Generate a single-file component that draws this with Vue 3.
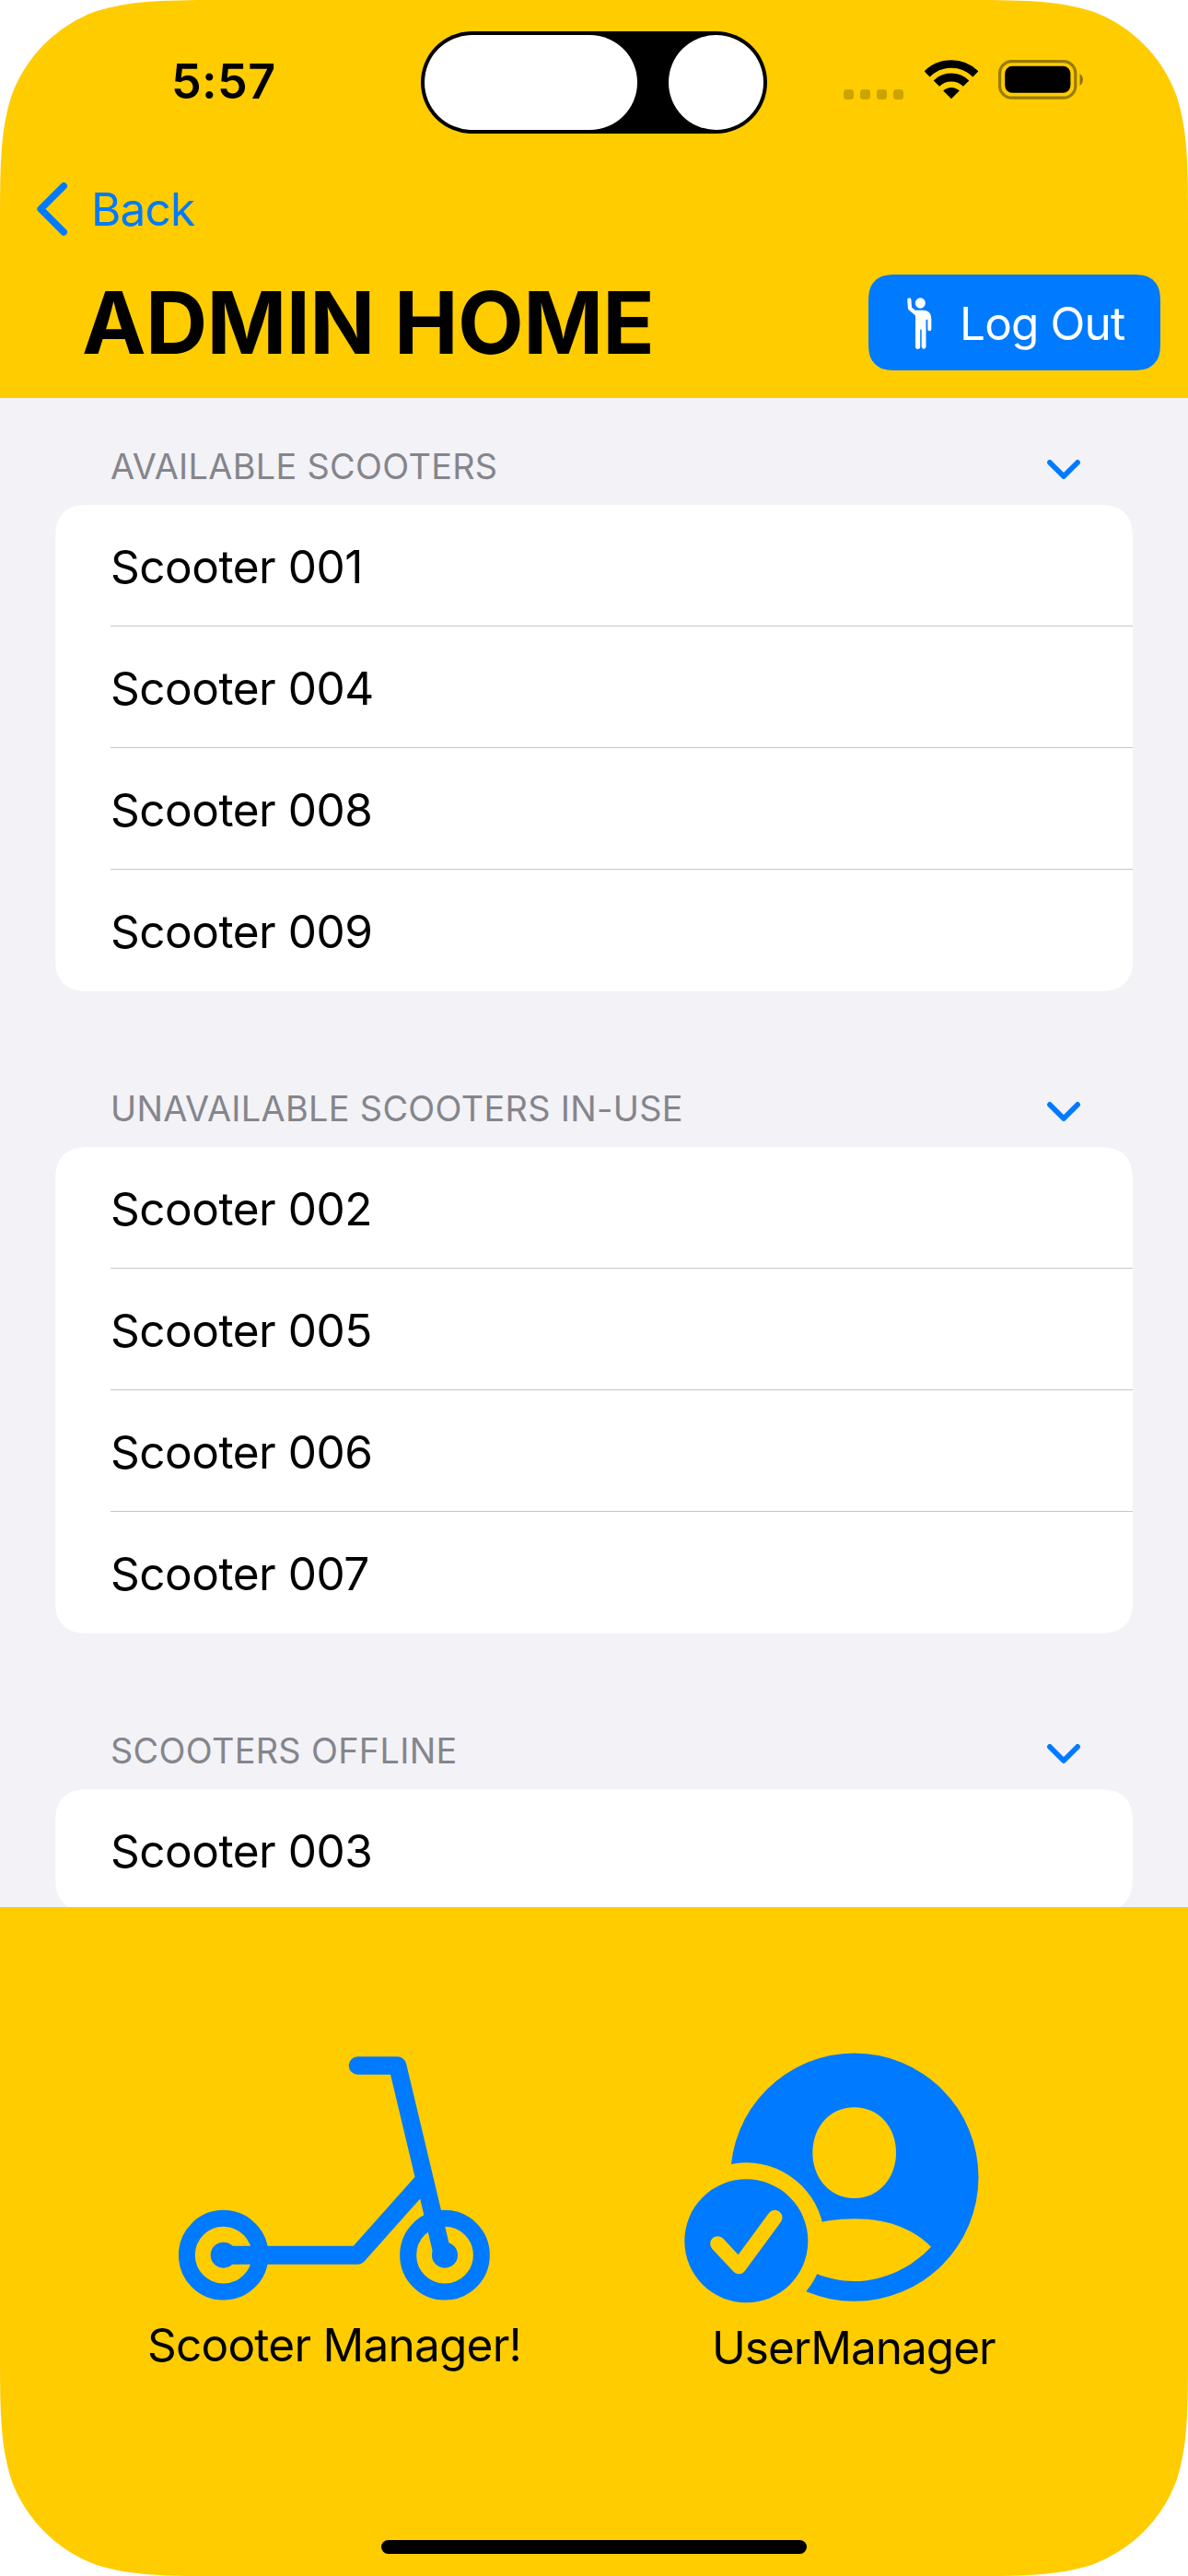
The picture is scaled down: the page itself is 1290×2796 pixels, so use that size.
<script setup>
const sections = [
  { title: 'Available Scooters', scooters: ['001', '004', '008', '009'] },
  { title: 'Unavailable Scooters In-Use', scooters: ['002', '005', '006', '007'] },
  { title: 'Scooters Offline', scooters: ['003'] },
]

const ROW_HEIGHT = 132

// Continuous-curvature rounded rectangle, as a clip-path value.
function squircle(w, h, r) {
  const a = 1.528665 * r
  const b = 1.08849 * r
  const c = 0.868407 * r
  const d = 0.631494 * r
  const e = 0.07491 * r
  const f = 0.372824 * r
  const g = 0.16906 * r
  return (
    `path("M${a} 0H${w - a}C${w - b} 0 ${w - c} 0 ${w - d} ${e}` +
    `C${w - f} ${g} ${w - g} ${f} ${w - e} ${d}C${w} ${c} ${w} ${b} ${w} ${a}` +
    `V${h - a}C${w} ${h - b} ${w} ${h - c} ${w - e} ${h - d}` +
    `C${w - g} ${h - f} ${w - f} ${h - g} ${w - d} ${h - e}C${w - c} ${h} ${w - b} ${h} ${w - a} ${h}` +
    `H${a}C${b} ${h} ${c} ${h} ${d} ${h - e}C${f} ${h - g} ${g} ${h - f} ${e} ${h - d}` +
    `C0 ${h - c} 0 ${h - b} 0 ${h - a}V${a}C0 ${b} 0 ${c} ${e} ${d}` +
    `C${g} ${f} ${f} ${g} ${d} ${e}C${c} 0 ${b} 0 ${a} 0Z")`
  )
}

const screenClip = squircle(1290, 2796, 165)
const buttonClip = squircle(317, 104, 24)
const cardClip = (count) => squircle(1170, count * ROW_HEIGHT, 30)
</script>

<template>
  <div class="screen" :style="{ clipPath: screenClip }">
    <header class="header">
      <div class="status">
        <div class="time">5:57</div>
        <div class="island">
          <span class="island-pill"></span>
          <span class="island-dot"></span>
        </div>
        <div class="indicators">
          <div class="signal"><i></i><i></i><i></i><i></i></div>
          <svg class="wifi" width="58" height="43" viewBox="0 0 58 43">
            <g fill="none" stroke="#000">
              <path d="M2.6 15.4A37.4 37.4 0 0 1 55.4 15.4" stroke-width="8.6" />
              <path d="M12.9 25.6A22.8 22.8 0 0 1 45.1 25.6" stroke-width="9" />
            </g>
            <path d="M29 42.3L20.2 33.4A12.8 12.8 0 0 1 37.8 33.4Z" />
          </svg>
          <svg class="battery" width="95" height="43" viewBox="0 0 95 43">
            <rect x="1.6" y="1.6" width="82.2" height="39.6" rx="13" fill="none" stroke="#000" stroke-opacity=".4" stroke-width="3.2" />
            <rect x="7.2" y="6.8" width="71.2" height="29" rx="8" />
            <path d="M88.5 15A8 8 0 0 1 88.5 28Z" fill-opacity=".45" />
          </svg>
        </div>
      </div>

      <a class="back">
        <svg width="35" height="58" viewBox="0 0 35 58">
          <path d="M29.2 3.9L4.2 28.9L29.2 53.9" fill="none" stroke="#007aff" stroke-width="7.6" stroke-linecap="round" stroke-linejoin="round" />
        </svg>
        <span>Back</span>
      </a>

      <div class="title-row">
        <h1>ADMIN HOME</h1>
        <button class="logout" :style="{ clipPath: buttonClip }">
          <svg width="28" height="57" viewBox="0 0 84 171" fill="#fff">
            <ellipse cx="46" cy="21" rx="16.5" ry="17" />
            <path d="M10 10L12 38L36 58" fill="none" stroke="#fff" stroke-width="12.5" stroke-linecap="round" stroke-linejoin="round" />
            <path d="M30 44H55C74 44 82 55 82 74V105.500A6 6 0 0 1 70 105.500V76C70 73.500 65 73.500 64.500 76V163A7 7 0 0 1 50 163V108C50 105.500 46 105.500 45.500 108V163A7.500 7.500 0 0 1 30 163Z" />
          </svg>
          <span>Log Out</span>
        </button>
      </div>
    </header>

    <main class="list">
      <section v-for="section in sections" :key="section.title" class="section">
        <div class="section-head">
          <h2>{{ section.title }}</h2>
          <svg width="36" height="21" viewBox="0 0 36 21">
            <path d="M2.900 2.900L18 18L33.100 2.900" fill="none" stroke="#007aff" stroke-width="5.700" stroke-linecap="round" stroke-linejoin="round" />
          </svg>
        </div>
        <ul class="card" :style="{ clipPath: cardClip(section.scooters.length) }">
          <li v-for="id in section.scooters" :key="id">Scooter {{ id }}</li>
        </ul>
      </section>
    </main>

    <footer class="footer">
      <div class="tiles">
        <a class="tile scooter">
          <svg width="339" height="268" viewBox="102 91 1017 804">
            <g fill="none" stroke="#007aff">
              <circle cx="248" cy="741" r="119.500" stroke-width="54" />
              <circle cx="969" cy="741" r="119.500" stroke-width="54" />
              <path d="M248 741H685L905 494" stroke-width="60" stroke-linejoin="round" />
              <path d="M685 124H815L962 741" stroke-width="58" stroke-linecap="round" stroke-linejoin="round" />
            </g>
            <g fill="#007aff">
              <circle cx="248" cy="741" r="42" />
              <circle cx="969" cy="741" r="42" />
            </g>
          </svg>
          <span>Scooter Manager!</span>
        </a>
        <a class="tile user">
          <svg width="320" height="272" viewBox="128 83 960 816">
            <circle cx="682.500" cy="488.500" r="404" fill="#007aff" />
            <path d="M682 261C762 261 818 325 818 409C818 490 762 557 682 557C602 557 546 490 546 409C546 325 602 261 682 261Z" fill="#fc0" />
            <path d="M520 648C570 632 626 624 682 624C800 624 882 664 932 715C870 781 780 827 682 827C636 827 596 817 559 803L500 770Z" fill="#fc0" />
            <circle cx="330" cy="696" r="255" fill="#fc0" />
            <circle cx="330" cy="696" r="201" fill="#007aff" />
            <path d="M237 705L306 779L423 620" fill="none" stroke="#fc0" stroke-width="49" stroke-linecap="round" stroke-linejoin="round" />
          </svg>
          <span>UserManager</span>
        </a>
      </div>
      <div class="home-indicator"></div>
    </footer>
  </div>
</template>

<style>
body {
  background: #fff;
}
</style>

<style scoped>
.screen {
  display: flex;
  flex-direction: column;
  width: 1290px;
  height: 2796px;
  overflow: hidden;
  background: #fc0;
  color: #000;
  font-family: Inter, "Liberation Sans", sans-serif;
  font-size: 49.5px;
  line-height: 60px;
}

h1,
h2,
ul {
  margin: 0;
  padding: 0;
}

.header {
  display: flex;
  flex-direction: column;
  flex: none;
  height: 432px;
}

.status {
  display: grid;
  grid-template-columns: 457px 376px 457px;
  align-items: center;
  height: 178px;
}

.time {
  padding-left: 186px;
  font-size: 52px;
  font-weight: 600;
  letter-spacing: 0.4px;
}

.island {
  display: flex;
  justify-content: space-between;
  box-sizing: border-box;
  height: 111px;
  padding: 4px;
  border-radius: 56px;
  background: #000;
}

.island-pill,
.island-dot {
  height: 103px;
  border-radius: 52px;
  background: #fff;
}

.island-pill {
  width: 231px;
}

.island-dot {
  width: 103px;
}

.indicators {
  display: flex;
  align-items: flex-end;
  padding: 0 0 5px 83px;
}

.signal {
  display: flex;
  gap: 7px;
}

.signal i {
  width: 11px;
  height: 11px;
  border-radius: 3.5px;
  background: rgba(0, 0, 0, 0.2);
}

.wifi {
  margin-left: 23px;
}

.battery {
  margin-left: 22px;
}

.back {
  display: flex;
  align-items: center;
  gap: 24px;
  height: 98px;
  padding-left: 40px;
  color: #007aff;
  letter-spacing: -0.8px;
}

.title-row {
  display: flex;
  align-items: center;
  justify-content: space-between;
  height: 148px;
  padding: 0 30px 0 89px;
}

h1 {
  font-size: 93.2px;
  font-weight: 700;
  line-height: 112px;
  letter-spacing: -0.65px;
}

.logout {
  display: flex;
  align-items: center;
  width: 317px;
  height: 104px;
  padding: 0 0 0 41px;
  border: 0;
  background: #007aff;
  color: #fff;
  font: inherit;
  letter-spacing: -0.84px;
}

.logout svg {
  margin-right: 30px;
}

.logout span {
  padding-top: 2px;
}

.list {
  flex: none;
  height: 1638px;
  overflow: hidden;
  background: #f2f2f7;
}

.section {
  padding: 0 60px 53px;
}

.section-head {
  display: flex;
  align-items: center;
  justify-content: space-between;
  height: 116px;
  padding: 0 57px 0 60px;
}

h2 {
  padding-top: 32px;
  color: #85858b;
  font-size: 37.8px;
  font-weight: 400;
  line-height: 46px;
  letter-spacing: 0.34px;
  text-transform: uppercase;
}

.section-head svg {
  margin-top: 39px;
}

.card {
  background: #fff;
  list-style: none;
}

li {
  position: relative;
  height: 132px;
  padding-left: 60px;
  line-height: 134px;
  letter-spacing: -0.48px;
}

li:not(:last-child)::after {
  position: absolute;
  right: 0;
  bottom: 0;
  left: 60px;
  height: 1px;
  background: #c6c6c8;
  content: "";
}

.footer {
  display: flex;
  flex-direction: column;
  flex: 1;
  justify-content: space-between;
  align-items: center;
  box-sizing: border-box;
  padding: 158px 0 24px;
}

.tiles {
  display: flex;
  align-self: stretch;
  padding-left: 160px;
}

.tile {
  display: flex;
  flex-direction: column;
}

.scooter {
  width: 583px;
  box-sizing: border-box;
  padding-top: 3px;
  letter-spacing: -0.76px;
}

.scooter svg {
  margin: 0 0 16px 34px;
}

.user {
  letter-spacing: -1px;
}

.user svg {
  margin-bottom: 18px;
}

.user span {
  padding-left: 30px;
}

.home-indicator {
  width: 462px;
  height: 15px;
  border-radius: 8px;
  background: #000;
}
</style>
